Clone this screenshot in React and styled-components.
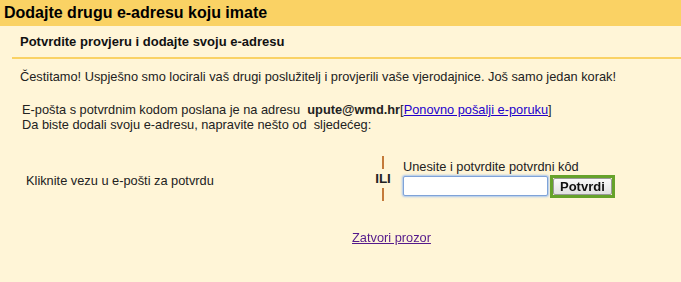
import React from "react";
import styled, { createGlobalStyle } from "styled-components";

const GlobalStyle = createGlobalStyle`
  * {
    box-sizing: border-box;
  }
  body {
    margin: 0;
    background: #fff5d7;
    font-family: Arial, "Liberation Sans", sans-serif;
    font-size: 12.8px;
    color: #222;
  }
`;

const Page = styled.div`
  width: 681px;
  height: 282px;
  background: #fff5d7;
  overflow: hidden;
`;

const Header = styled.div`
  height: 26px;
  background: #fad264;
  padding-left: 4px;
  display: flex;
  align-items: center;
  font-size: 16px;
  font-weight: bold;
  color: #000;
`;

const SubHeader = styled.div`
  margin-left: 12px;
  padding: 8px 0 0 8px;
  height: 33px;
  border-bottom: 2px solid #fad264;
  font-size: 13px;
  font-weight: bold;
  color: #111;
`;

const Body = styled.div`
  padding: 10px 0 0 20px;
`;

const Para = styled.p`
  margin: 0 0 ${(p) => p.$gap || 0}px ${(p) => p.$indent || 0}px;
  line-height: 15px;
`;

const Link = styled.a`
  color: ${(p) => (p.$visited ? "#551a8b" : "#2200cc")};
  text-decoration: underline;
`;

const Choices = styled.div`
  display: flex;
  align-items: center;
  margin-top: 23px;
  height: 46px;
`;

const Left = styled.div`
  width: 350px;
  padding-left: 6px;
  padding-top: 4px;
`;

const Divider = styled.div`
  width: 26px;
  display: flex;
  flex-direction: column;
  align-items: center;
  gap: 2px;
  font-weight: bold;
  color: #222;
  font-size: 13.5px;
  line-height: 15px;
`;

const Tick = styled.span`
  width: 2px;
  height: 13px;
  background: #c47a3a;
`;

const Right = styled.div`
  padding-left: 7px;
  display: flex;
  flex-direction: column;
`;

const Label = styled.div`
  line-height: 15px;
  margin-bottom: 1px;
`;

const Row = styled.div`
  display: flex;
  align-items: center;
  gap: 2px;
`;

const CodeInput = styled.input`
  width: 145px;
  height: 20px;
  padding: 0 2px;
  border: 1px solid #7fa3d8;
  box-shadow: 0 0 2px 1px #a9c6ef;
  border-radius: 2px;
  background: #fff;
  outline: none;
  font-family: Arial, "Liberation Sans", sans-serif;
  font-size: 13px;
`;

const ButtonFrame = styled.div`
  border: 3px solid #66a22b;
  display: flex;
`;

const Button = styled.button`
  height: 17px;
  padding: 0 6px;
  border: 1px solid #999;
  border-radius: 2px;
  background: linear-gradient(#fafafa, #e2e2e2);
  font-family: Arial, "Liberation Sans", sans-serif;
  font-size: 13px;
  font-weight: bold;
  line-height: 15px;
  color: #111;
  cursor: pointer;
`;

const Footer = styled.div`
  margin-top: 29px;
  padding-left: 332px;
`;

export default function App() {
  return (
    <Page>
      <GlobalStyle />
      <Header>Dodajte drugu e-adresu koju imate</Header>
      <SubHeader>Potvrdite provjeru i dodajte svoju e-adresu</SubHeader>
      <Body>
        <Para $gap={18}>
          Čestitamo! Uspješno smo locirali vaš drugi poslužitelj i provjerili vaše
          vjerodajnice. Još samo jedan korak!
        </Para>
        <Para $indent={2}>
          E-pošta s potvrdnim kodom poslana je na adresu&nbsp; <b>upute@wmd.hr</b>
          [<Link href="#">Ponovno pošalji e-poruku</Link>]
        </Para>
        <Para $indent={2}>
          Da biste dodali svoju e-adresu, napravite nešto od&nbsp; sljedećeg:
        </Para>
        <Choices>
          <Left>Kliknite vezu u e-pošti za potvrdu</Left>
          <Divider>
            <Tick />
            ILI
            <Tick />
          </Divider>
          <Right>
            <Label>Unesite i potvrdite potvrdni kôd</Label>
            <Row>
              <CodeInput type="text" autoFocus />
              <ButtonFrame>
                <Button type="button">Potvrdi</Button>
              </ButtonFrame>
            </Row>
          </Right>
        </Choices>
        <Footer>
          <Link href="#" $visited>
            Zatvori prozor
          </Link>
        </Footer>
      </Body>
    </Page>
  );
}
